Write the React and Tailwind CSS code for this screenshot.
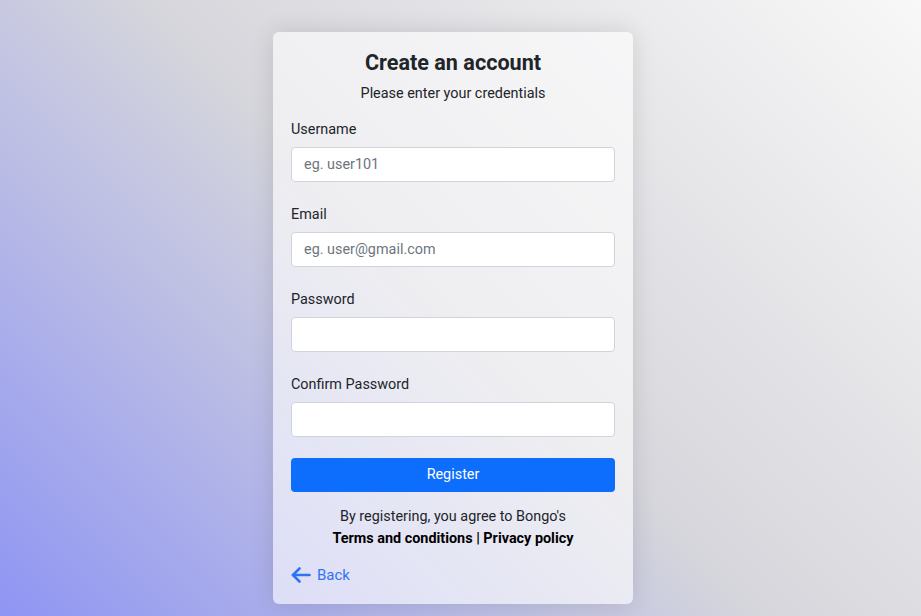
import React from 'react';

const fields = [
  { label: 'Username', placeholder: 'eg. user101', type: 'text' },
  { label: 'Email', placeholder: 'eg. user@gmail.com', type: 'email' },
  { label: 'Password', placeholder: '', type: 'password' },
  { label: 'Confirm Password', placeholder: '', type: 'password' },
];

const BackArrow = () => (
  <svg width="20" height="16" viewBox="0 0 20 16" fill="none" stroke="currentColor" strokeWidth="2.6" strokeLinecap="round" strokeLinejoin="round">
    <path d="M2 8H18.5" />
    <path d="M8.5 1.5L2 8l6.5 6.5" />
  </svg>
);

export default function App() {
  return (
    <div
      className="min-h-[616px] w-full flex justify-start pl-[273px] pt-[32px] bg-[linear-gradient(45deg,#8f95f3_0%,#d6d6dc_50%,#f8f8f8_100%)] text-[#212529]"
      style={{ fontFamily: 'Roboto, "Liberation Sans", sans-serif' }}
    >
      <div className="w-[360px] h-[572px] flex flex-col rounded-[6px] bg-white/60 px-[18px] pt-[18px] shadow-[0_0_24px_rgba(0,0,0,0.12)]">
        <h1 className="text-center text-[21.6px] leading-[26px] font-bold">Create an account</h1>
        <p className="text-center text-[14.4px] leading-[20px] mt-[8px]">Please enter your credentials</p>

        <div className="flex flex-col gap-[22px] mt-[15px]">
          {fields.map((f) => (
            <div key={f.label} className="flex flex-col">
              <label className="text-[14.4px] leading-[22px] mb-[6px]">{f.label}</label>
              <input
                type={f.type}
                placeholder={f.placeholder}
                className="h-[35px] w-full rounded-[4px] border border-[#ced4da] bg-white px-[12px] text-[14.4px] placeholder:text-[#6c757d] outline-none"
              />
            </div>
          ))}
        </div>

        <button className="mt-[21px] h-[34px] w-full rounded-[4px] bg-[#0d6efd] text-white text-[14.4px]">
          Register
        </button>

        <div className="mt-[14px] text-center text-[14.4px] leading-[22px]">
          <div>By registering, you agree to Bongo's</div>
          <div className="font-bold text-black">
            Terms and conditions | Privacy policy
          </div>
        </div>

        <a href="#" className="mt-[15px] flex items-center gap-[6px] text-[#2f73f5] text-[15px] leading-[20px]">
          <BackArrow />
          <span>Back</span>
        </a>
      </div>
    </div>
  );
}
